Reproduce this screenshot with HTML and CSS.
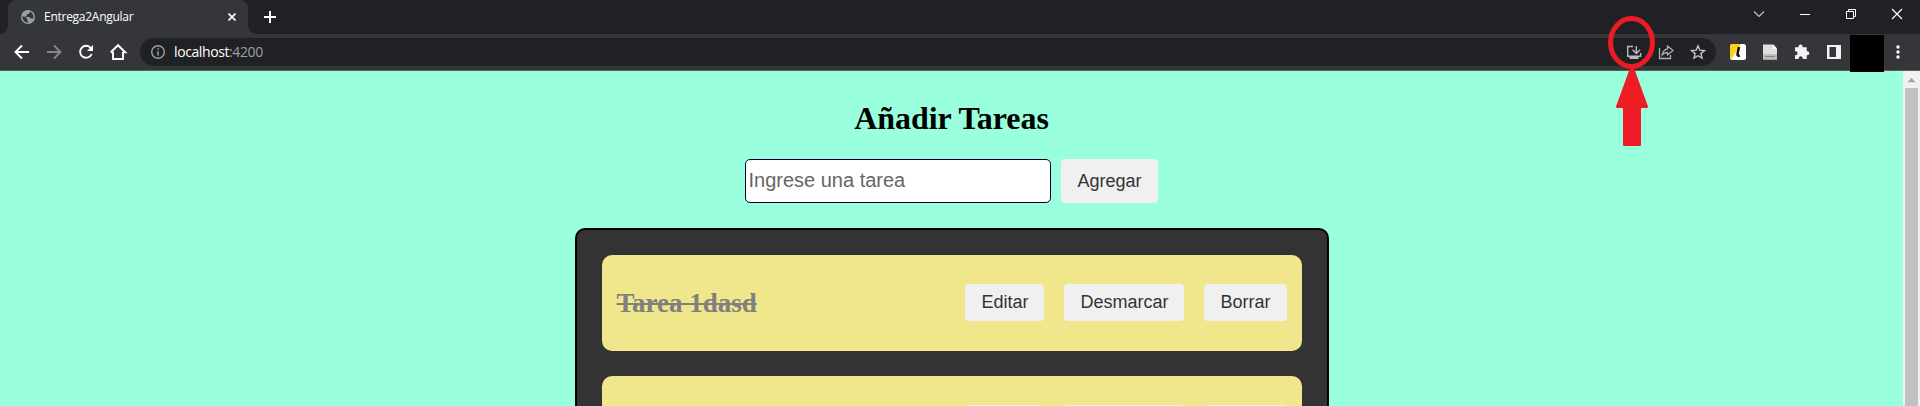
FILE: index.html
```html
<!DOCTYPE html>
<html lang="es">
<head>
<meta charset="utf-8">
<title>Entrega2Angular</title>
<link rel="stylesheet" href="styles.css">
</head>
<body>
<div class="window">
  <header class="tabstrip">
    <div class="tab">
      <svg class="globe" width="14" height="14" viewBox="0 0 14 14"><circle cx="7" cy="7" r="7" fill="#9aa0a6"/><path d="M1.400 6L5 7.500l1.300 1.600v1.600l.8.700v1.300C4 12.700 1 9.700 1.400 6zM8.800 1.600v1.200L7.600 4H6v1.400l-1.500.6v1h3.700l1.500 1.400h2.800C13 5.500 11.300 2.600 8.800 1.600z" fill="#35363a"/></svg>
      <span class="tab-title">Entrega2Angular</span>
      <svg class="tab-close" width="8" height="8" viewBox="0 0 8 8"><path d="M.5.5l7 7M7.500.5l-7 7" stroke="#fff" stroke-width="1.600"/></svg>
    </div>
    <svg class="new-tab" width="12" height="12" viewBox="0 0 12 12"><path d="M6 0v12M0 6h12" stroke="#fff" stroke-width="2"/></svg>
    <div class="controls">
      <svg class="control" viewBox="0 0 46 28"><path d="M18 11.500l5 5 5-5" fill="none" stroke="#c4c4c6" stroke-width="1.200"/></svg>
      <svg class="control" viewBox="0 0 46 28"><path d="M18 14.500h10" stroke="#fff"/></svg>
      <svg class="control" viewBox="0 0 46 28"><path d="M18.500 11.500h7v7h-7zM20.500 11.500v-2h7v7h-2" fill="none" stroke="#fff"/></svg>
      <svg class="control" viewBox="0 0 46 28"><path d="M18 9l10 10M28 9l-10 10" stroke="#fff" stroke-width="1.200"/></svg>
    </div>
  </header>

  <div class="toolbar">
    <svg class="cell" viewBox="0 0 32 36"><path d="M23 18H10.500M16 11.500L9.500 18l6.500 6.500" fill="none" stroke="#fff" stroke-width="1.900"/></svg>
    <svg class="cell" viewBox="0 0 32 36"><path d="M9 18h12.500M16 11.500l6.500 6.500-6.500 6.500" fill="none" stroke="#86878a" stroke-width="1.900"/></svg>
    <svg class="cell" viewBox="0 0 32 36"><path d="M20.800 14A6 6 0 1 0 21.700 20" fill="none" stroke="#fff" stroke-width="1.900"/><path d="M23 11v6h-6z" fill="#fff"/></svg>
    <svg class="cell" viewBox="0 0 32 36"><path d="M11 18v7h10v-7M8.800 18.300L16 11.200l7.200 7.100h-2.500M8.800 18.300h2.500" fill="none" stroke="#fff" stroke-width="1.900"/></svg>
    <div class="omnibox">
      <svg class="info" width="16" height="16" viewBox="0 0 16 16"><circle cx="8" cy="8" r="6.300" fill="none" stroke="#9aa0a6" stroke-width="1.400"/><path d="M8 7.200v4.300M8 4.200v1.600" stroke="#9aa0a6" stroke-width="1.500"/></svg>
      <span class="url">localhost<span class="port">:4200</span></span>
      <svg class="cell push" viewBox="0 0 32 36"><g fill="none" stroke="#b7b9bc" stroke-width="1.400"><path d="M15 12.500H9.700v9.700h13v-3.200M18.300 12v7.500M14.500 15.800l3.800 3.800 3.800-3.800"/></g><path d="M11.500 22h9v3h-9z" fill="#b7b9bc"/></svg>
      <svg class="cell" viewBox="0 0 32 36"><path d="M9.500 14v10.500h11V21M17.500 12l5.500 4.500-5.500 4.500v-2.500c-2.500 0-4 .7-5.300 2.300.5-3 2.300-5.300 5.300-6z" fill="none" stroke="#aeb0b3" stroke-width="1.300"/></svg>
      <svg class="cell" viewBox="0 0 32 36"><path d="M16 11.800l1.800 4.300 4.700.4-3.600 3.100 1.100 4.500-4-2.400-4 2.400 1.100-4.500-3.600-3.100 4.700-.4z" fill="none" stroke="#c3c5c8" stroke-width="1.400"/></svg>
    </div>
    <svg class="cell" viewBox="0 0 32 36"><rect x="8" y="10" width="16" height="16" rx="2.500" fill="#fff"/><path d="M10.500 10H19L9 25.500a2.500 2.500 0 0 1-1-2V12.500a2.500 2.500 0 0 1 2.500-2.500z" fill="#fcd116"/><path d="M17 13l-1.500 7q-.4 2.200 2.300 1.500" fill="none" stroke="#111" stroke-width="2.500"/></svg>
    <svg class="cell" viewBox="0 0 32 36"><path d="M9 10.500h10.500l3.500 4v11H9z" fill="#dedede"/><path d="M19 10.500v4.300h4z" fill="#fff"/><rect x="9" y="20" width="14" height="5.500" fill="#bdbdbd"/><path d="M11 22.500h10" stroke="#858585"/></svg>
    <svg class="cell" viewBox="0 0 32 36"><path d="M9 13.200h3.600v-.7a2 2 0 0 1 4 0v.7h4.100v4.100h.6a2 2 0 0 1 0 4h-.6V25h-4v-.7a2 2 0 0 0-4 0v.7H9v-3.700h.6a2 2 0 0 0 0-4H9z" fill="#f1f3f4"/></svg>
    <svg class="cell" viewBox="0 0 32 36"><path d="M9 11h14v14H9zM11.500 13v10H18V13z" fill="#f1f3f4" fill-rule="evenodd"/></svg>
    <div class="profile"></div>
    <svg class="menu" width="4" height="14" viewBox="0 0 4 14"><g fill="#fff"><circle cx="2" cy="2" r="1.700"/><circle cx="2" cy="7" r="1.700"/><circle cx="2" cy="12" r="1.700"/></g></svg>
  </div>

  <div class="viewport">
    <main class="page">
      <h1 class="title">Añadir Tareas</h1>
      <form class="add-form">
        <input class="task-input" type="text" placeholder="Ingrese una tarea">
        <button class="btn" type="button">Agregar</button>
      </form>
      <section class="list">
        <article class="task">
          <h2 class="task-name">Tarea 1dasd</h2>
          <div class="actions">
            <button class="btn">Editar</button>
            <button class="btn">Desmarcar</button>
            <button class="btn">Borrar</button>
          </div>
        </article>
        <article class="task">
          <div class="actions">
            <button class="btn">Editar</button>
            <button class="btn">Desmarcar</button>
            <button class="btn">Borrar</button>
          </div>
        </article>
      </section>
    </main>
    <div class="scrollbar">
      <svg width="17" height="17" viewBox="0 0 17 17"><path d="M4.500 11.200l4-4.400 4 4.400z" fill="#a3a3a3"/></svg>
      <div class="thumb"></div>
    </div>
  </div>

  <svg class="annotation" width="50" height="132" viewBox="0 0 50 132"><g fill="#ed1c24"><ellipse cx="24.500" cy="26.500" rx="21" ry="24" fill="none" stroke="#ed1c24" stroke-width="5"/><path d="M23 52h4L41 90.500q0 1.500-1.500 1.500H34v36.500q0 1.500-1.500 1.500h-15q-1.500 0-1.500-1.500V92H10.500Q9 92 9 90.500z"/></g></svg>
</div>
</body>
</html>
```
FILE: styles.css
```css
* { box-sizing: border-box; }

body { margin: 0; overflow: hidden; }

.window {
  position: relative;
  display: flex;
  flex-direction: column;
  height: 406px;
  overflow: hidden;
}

svg { display: block; flex: none; }

.tabstrip {
  display: flex;
  flex: none;
  height: 34px;
  padding-left: 8px;
  background: #202124;
}

.tab {
  position: relative;
  display: flex;
  align-items: center;
  width: 240px;
  padding: 0 12px 0 13px;
  border-radius: 8px 8px 0 0;
  background: #35363a;
}

/* concave feet on either side of the active tab */
.tab::before,
.tab::after {
  content: "";
  position: absolute;
  bottom: 0;
  width: 8px;
  height: 8px;
}
.tab::before { left: -8px; background: radial-gradient(circle at 0 0, transparent 7.500px, #35363a 8px); }
.tab::after { right: -8px; background: radial-gradient(circle at 100% 0, transparent 7.500px, #35363a 8px); }

.tab-title {
  margin-left: 9px;
  color: #fff;
  font: 12px/16px "Open Sans", "Noto Sans", sans-serif;
  letter-spacing: -0.27px;
}

.tab-close { margin-left: auto; }
.new-tab { margin: 11px 0 0 16px; }
.controls { display: flex; margin-left: auto; }
.control { width: 46px; height: 28px; }

.toolbar {
  display: flex;
  flex: none;
  align-items: center;
  height: 37px;
  padding: 0 20px 0 6px;
  border-bottom: 1px solid #5c5b60;
  background: #35363a;
}

.cell { width: 32px; height: 36px; }

.omnibox {
  display: flex;
  flex: 1;
  align-items: center;
  height: 28px;
  margin: 0 6px;
  padding: 0 2px 0 10px;
  border-radius: 14px;
  background: #202124;
}

.url {
  margin-left: 8px;
  color: #fff;
  font: 14px/20px "Open Sans", "Noto Sans", sans-serif;
  letter-spacing: -0.4px;
}
.port { color: #9aa0a6; }
.push { margin-left: auto; }

.profile {
  z-index: 1;
  flex: none;
  align-self: flex-start;
  width: 34px;
  height: 37px;
  margin-top: 1px;
  background: #000;
}
.menu { margin-left: 12.5px; }

.viewport { display: flex; flex: 1; min-height: 0; }

.page {
  display: flex;
  flex: 1;
  flex-direction: column;
  align-items: center;
  overflow: hidden;
  background: #99ffdd;
}

.title {
  margin: 29px 0 22px;
  color: #000;
  font: bold 32px/37px "Liberation Serif", serif;
  letter-spacing: -0.05px;
}

.add-form { display: flex; flex: none; gap: 10px; height: 44px; }

.task-input {
  width: 306px;
  padding: 0 2px 2px;
  border: 1px solid #000033;
  border-radius: 5px;
  background: #fff;
  font: 20px "Liberation Sans", sans-serif;
}
.task-input::placeholder { color: #666; }

.btn {
  padding: 8px 16px;
  border: 0;
  border-radius: 4px;
  background: #f0f0f0;
  color: #333;
  font: 18px/21px "Liberation Sans", sans-serif;
}

.list {
  display: flex;
  flex: none;
  flex-direction: column;
  gap: 25px;
  width: 754px;
  margin-top: 25px;
  padding: 25px;
  border: 2px solid #000;
  border-radius: 10px;
  background: #333;
}

.task {
  display: flex;
  align-items: flex-start;
  height: 96px;
  padding: 29px 15px 0;
  border-radius: 10px;
  background: #f0e68c;
}

.task-name {
  margin: 3px 0 0;
  color: gray;
  font: bold 27px/32px "Liberation Serif", serif;
  text-decoration: line-through;
}

.actions { display: flex; gap: 20px; margin-left: auto; }

.scrollbar {
  flex: none;
  width: 17px;
  background: #f1f1f1;
}
.thumb { height: 330px; margin: 0 2px; background: #c1c1c1; }

.annotation { position: absolute; left: 1607px; top: 16px; }
```
